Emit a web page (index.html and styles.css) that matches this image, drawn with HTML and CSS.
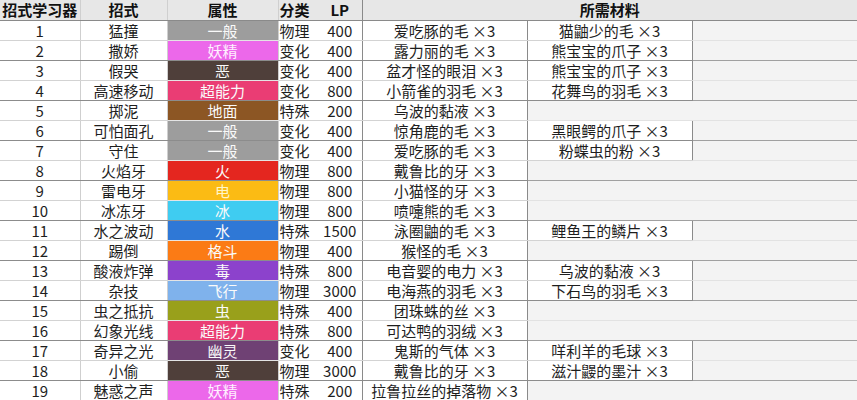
FILE: index.html
```html
<!DOCTYPE html>
<html lang="zh-CN">
<head>
<meta charset="utf-8">
<title>招式学习器</title>
<link rel="stylesheet" href="styles.css">
</head>
<body>
<table class="sheet">
  <colgroup>
    <col class="c-no"><col class="c-move"><col class="c-type"><col class="c-cat"><col class="c-lp"><col class="c-mat"><col class="c-mat"><col class="c-rest">
  </colgroup>
  <thead>
    <tr class="head">
      <th>招式学习器</th><th>招式</th><th>属性</th><th class="cat">分类</th><th class="lp">LP</th><th colspan="3" class="mat-head">所需材料</th>
    </tr>
  </thead>
  <tbody>
    <tr><td>1</td><td>猛撞</td><td class="t normal">一般</td><td class="cat">物理</td><td class="lp">400</td><td class="m1">爱吃豚的毛 ×3</td><td class="m2">猫鼬少的毛 ×3</td><td class="rest"></td></tr>
    <tr class="ev"><td>2</td><td>撒娇</td><td class="t fairy">妖精</td><td class="cat">变化</td><td class="lp">400</td><td class="m1">露力丽的毛 ×3</td><td class="m2">熊宝宝的爪子 ×3</td><td class="rest"></td></tr>
    <tr><td>3</td><td>假哭</td><td class="t dark">恶</td><td class="cat">变化</td><td class="lp">400</td><td class="m1">盆才怪的眼泪 ×3</td><td class="m2">熊宝宝的爪子 ×3</td><td class="rest"></td></tr>
    <tr class="ev"><td>4</td><td>高速移动</td><td class="t psychic">超能力</td><td class="cat">变化</td><td class="lp">800</td><td class="m1">小箭雀的羽毛 ×3</td><td class="m2">花舞鸟的羽毛 ×3</td><td class="rest"></td></tr>
    <tr><td>5</td><td>掷泥</td><td class="t ground">地面</td><td class="cat">特殊</td><td class="lp">200</td><td class="m1">乌波的黏液 ×3</td><td class="rest"></td><td class="rest"></td></tr>
    <tr class="ev"><td>6</td><td>可怕面孔</td><td class="t normal">一般</td><td class="cat">变化</td><td class="lp">400</td><td class="m1">惊角鹿的毛 ×3</td><td class="m2">黑眼鳄的爪子 ×3</td><td class="rest"></td></tr>
    <tr><td>7</td><td>守住</td><td class="t normal">一般</td><td class="cat">变化</td><td class="lp">400</td><td class="m1">爱吃豚的毛 ×3</td><td class="m2">粉蝶虫的粉 ×3</td><td class="rest"></td></tr>
    <tr class="ev"><td>8</td><td>火焰牙</td><td class="t fire">火</td><td class="cat">物理</td><td class="lp">800</td><td class="m1">戴鲁比的牙 ×3</td><td class="rest"></td><td class="rest"></td></tr>
    <tr><td>9</td><td>雷电牙</td><td class="t electric">电</td><td class="cat">物理</td><td class="lp">800</td><td class="m1">小猫怪的牙 ×3</td><td class="rest"></td><td class="rest"></td></tr>
    <tr class="ev"><td>10</td><td>冰冻牙</td><td class="t ice">冰</td><td class="cat">物理</td><td class="lp">800</td><td class="m1">喷嚏熊的毛 ×3</td><td class="rest"></td><td class="rest"></td></tr>
    <tr><td>11</td><td>水之波动</td><td class="t water">水</td><td class="cat">特殊</td><td class="lp">1500</td><td class="m1">泳圈鼬的毛 ×3</td><td class="m2">鲤鱼王的鳞片 ×3</td><td class="rest"></td></tr>
    <tr class="ev"><td>12</td><td>踢倒</td><td class="t fighting">格斗</td><td class="cat">物理</td><td class="lp">400</td><td class="m1">猴怪的毛 ×3</td><td class="rest"></td><td class="rest"></td></tr>
    <tr><td>13</td><td>酸液炸弹</td><td class="t poison">毒</td><td class="cat">特殊</td><td class="lp">800</td><td class="m1">电音婴的电力 ×3</td><td class="m2">乌波的黏液 ×3</td><td class="rest"></td></tr>
    <tr class="ev"><td>14</td><td>杂技</td><td class="t flying">飞行</td><td class="cat">物理</td><td class="lp">3000</td><td class="m1">电海燕的羽毛 ×3</td><td class="m2">下石鸟的羽毛 ×3</td><td class="rest"></td></tr>
    <tr><td>15</td><td>虫之抵抗</td><td class="t bug">虫</td><td class="cat">特殊</td><td class="lp">400</td><td class="m1">团珠蛛的丝 ×3</td><td class="rest"></td><td class="rest"></td></tr>
    <tr class="ev"><td>16</td><td>幻象光线</td><td class="t psychic">超能力</td><td class="cat">特殊</td><td class="lp">800</td><td class="m1">可达鸭的羽绒 ×3</td><td class="rest"></td><td class="rest"></td></tr>
    <tr><td>17</td><td>奇异之光</td><td class="t ghost">幽灵</td><td class="cat">变化</td><td class="lp">400</td><td class="m1">鬼斯的气体 ×3</td><td class="m2">咩利羊的毛球 ×3</td><td class="rest"></td></tr>
    <tr class="ev"><td>18</td><td>小偷</td><td class="t dark">恶</td><td class="cat">物理</td><td class="lp">3000</td><td class="m1">戴鲁比的牙 ×3</td><td class="m2">滋汁鼹的墨汁 ×3</td><td class="rest"></td></tr>
    <tr><td>19</td><td>魅惑之声</td><td class="t fairy">妖精</td><td class="cat">特殊</td><td class="lp">200</td><td class="m1">拉鲁拉丝的掉落物 ×3</td><td class="rest"></td><td class="rest"></td></tr>
  </tbody>
</table>
</body>
</html>
```

FILE: styles.css
```css
html, body {
  margin: 0;
  padding: 0;
  background: #f3f3f3;
}

.sheet {
  border-collapse: collapse;
  table-layout: fixed;
  width: 857px;
  font-family: "Noto Sans CJK SC", "Noto Sans", sans-serif;
  font-size: 15px;
  color: #1e1e1e;
}

.c-no { width: 80px; }
.c-move { width: 87px; }
.c-type { width: 111px; }
.c-cat { width: 40px; }
.c-lp { width: 44px; }
.c-mat { width: 165px; }
.c-rest { width: 165px; }

.sheet th,
.sheet td {
  padding: 0;
  text-align: center;
  line-height: 18px;
  white-space: nowrap;
  overflow: hidden;
  background: #ffffff;
  border-right: 1px solid #cfcfcf;
  border-bottom: 1px solid #d3d3d3;
}

.head th {
  height: 20px;
  background: #e7e7e7;
  color: #111;
  font-weight: bold;
  border-bottom: 1px solid #8a8a8a;
}

.sheet tbody tr { height: 20px; }

.sheet tbody tr.ev td { border-bottom-color: #8c8c8c; }

.sheet .cat {
  text-align: left;
  padding-left: 1px;
  border-right: none;
}

.sheet .lp { border-right: 1px solid #8a8a8a; }

.head .mat-head {
  border-right: none;
}

.sheet .m1 { border-right: 1px solid #8a8a8a; }
.sheet .m2 { border-right: 1px solid #8a8a8a; }

.sheet .rest {
  background: #f3f3f3;
  border-right: 1px solid #f3f3f3;
  border-bottom-color: #e2e2e2;
}

.sheet tbody tr.ev td.rest { border-bottom-color: #a0a0a0; }

.sheet .t {
  color: #fafafa;
  border-bottom-color: #e4e4e4;
}

.sheet tbody tr.ev td.t { border-bottom-color: #8c8c8c; }

.normal { background: #9d9d9d !important; }
.fairy { background: #ec68ea !important; color: #fff0ff !important; }
.dark { background: #4f3f3a !important; }
.psychic { background: #ea3d74 !important; }
.ground { background: #8c5624 !important; }
.fire { background: #e4261f !important; }
.electric { background: #fbbb14 !important; color: #fff6c8 !important; }
.ice { background: #3fccf1 !important; }
.water { background: #2f78d6 !important; }
.fighting { background: #fb7b15 !important; }
.poison { background: #8c42cc !important; }
.flying { background: #7fb2ec !important; }
.bug { background: #99a01b !important; }
.ghost { background: #6f4174 !important; }
```
